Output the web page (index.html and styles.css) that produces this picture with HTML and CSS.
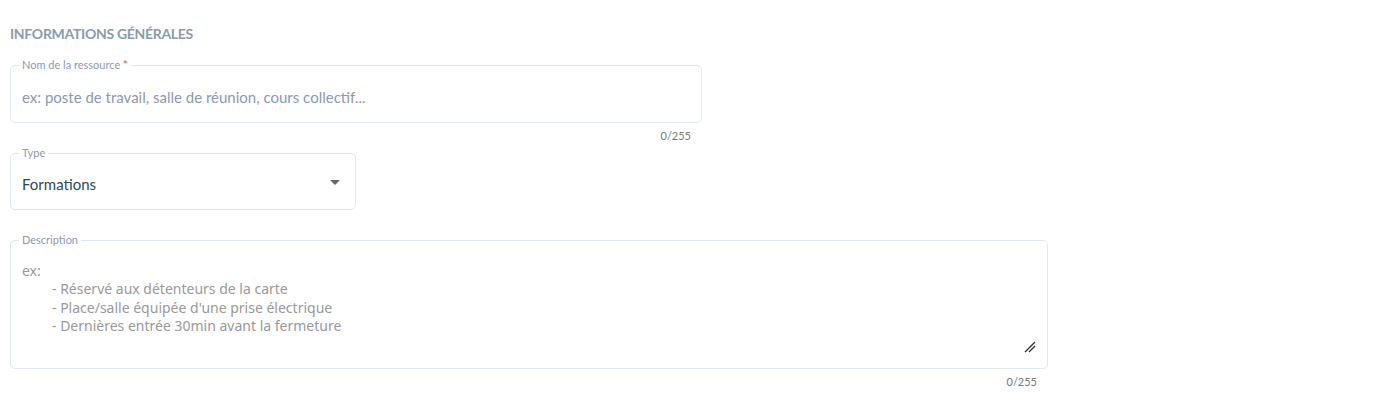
FILE: index.html
```html
<!DOCTYPE html>
<html lang="fr">
<head>
    <meta charset="UTF-8">
    <title>Ressource - Informations générales</title>
    <link rel="stylesheet" href="styles.css">
</head>
<body>

    <div class="section">
        <h3 class="section-title">Informations générales</h3>

        <!-- Nom de la ressource -->
        <div class="field field-name">
            <fieldset class="outline">
                <legend>Nom de la ressource <span class="required">*</span></legend>
                <input type="text" class="control" placeholder="ex: poste de travail, salle de réunion, cours collectif...">
            </fieldset>
            <div class="counter">0/255</div>
        </div>

        <!-- Type -->
        <div class="field field-type">
            <fieldset class="outline">
                <legend>Type</legend>
                <div class="select">
                    <span class="select-value">Formations</span>
                    <span class="select-arrow"></span>
                </div>
            </fieldset>
        </div>

        <!-- Description -->
        <div class="field field-desc">
            <fieldset class="outline">
                <legend>Description</legend>
                <div class="textarea">
                    <div class="placeholder">ex:<br>
                        <span class="indent">- Réservé aux détenteurs de la carte</span><br>
                        <span class="indent">- Place/salle équipée d'une prise électrique</span><br>
                        <span class="indent">- Dernières entrée 30min avant la fermeture</span>
                    </div>
                    <svg class="resize" width="12" height="12" viewBox="0 0 12 12">
                        <path d="M1 11 L11 1 M5 11 L11 5" stroke="#333" stroke-width="1.4" fill="none"/>
                    </svg>
                </div>
            </fieldset>
            <div class="counter">0/255</div>
        </div>
    </div>

</body>
</html>
```

FILE: styles.css
```css
body {
    margin: 0;
    padding: 0;
    background: #fff;
    font-family: 'Lato', 'Liberation Sans', sans-serif;
    color: #2c4a5a;
}

.section {
    padding: 25px 10px 10px 10px;
}

.section-title {
    margin: 0 0 17px 0;
    font-size: 14px;
    font-weight: bold;
    text-transform: uppercase;
    color: #8a9bb0;
    letter-spacing: -0.3px;
}

.field {
    margin-bottom: 5px;
}

.field-name {
    width: 692px;
}

.field-type {
    width: 346px;
    margin-bottom: 24px;
}

.field-desc {
    width: 1038px;
}

.outline {
    margin: 0;
    padding: 0 11px;
    border: 1px solid #dde8ef;
    border-radius: 5px;
    min-width: 0;
}

.outline legend {
    margin-left: -3px;
    padding: 0 3px;
    font-size: 11px;
    color: #8a9bb0;
    line-height: 12px;
}

.required {
    color: #e74c3c;
}

.control {
    display: block;
    width: 100%;
    height: 51px;
    padding: 0;
    border: 0;
    outline: none;
    font-family: inherit;
    font-size: 15px;
    color: #2c4a5a;
    background: transparent;
}

.control::placeholder {
    color: #8a9bb0;
}

.select {
    display: flex;
    align-items: center;
    justify-content: space-between;
    height: 50px;
}

.select-value {
    font-size: 15px;
    color: #2c4a5a;
}

.select-arrow {
    width: 0;
    height: 0;
    margin: 0 4px 3px 0;
    border-left: 5px solid transparent;
    border-right: 5px solid transparent;
    border-top: 5px solid #666;
}

.textarea {
    position: relative;
    height: 122px;
}

.placeholder {
    padding-top: 16px;
    font-family: 'Noto Sans', sans-serif;
    font-size: 14px;
    line-height: 18.3px;
    color: #999;
}

.indent {
    padding-left: 30px;
}

.resize {
    position: absolute;
    right: 0;
    bottom: 15px;
}

.counter {
    padding: 6px 11px 0 0;
    text-align: right;
    font-size: 11px;
    color: #777;
}
```
